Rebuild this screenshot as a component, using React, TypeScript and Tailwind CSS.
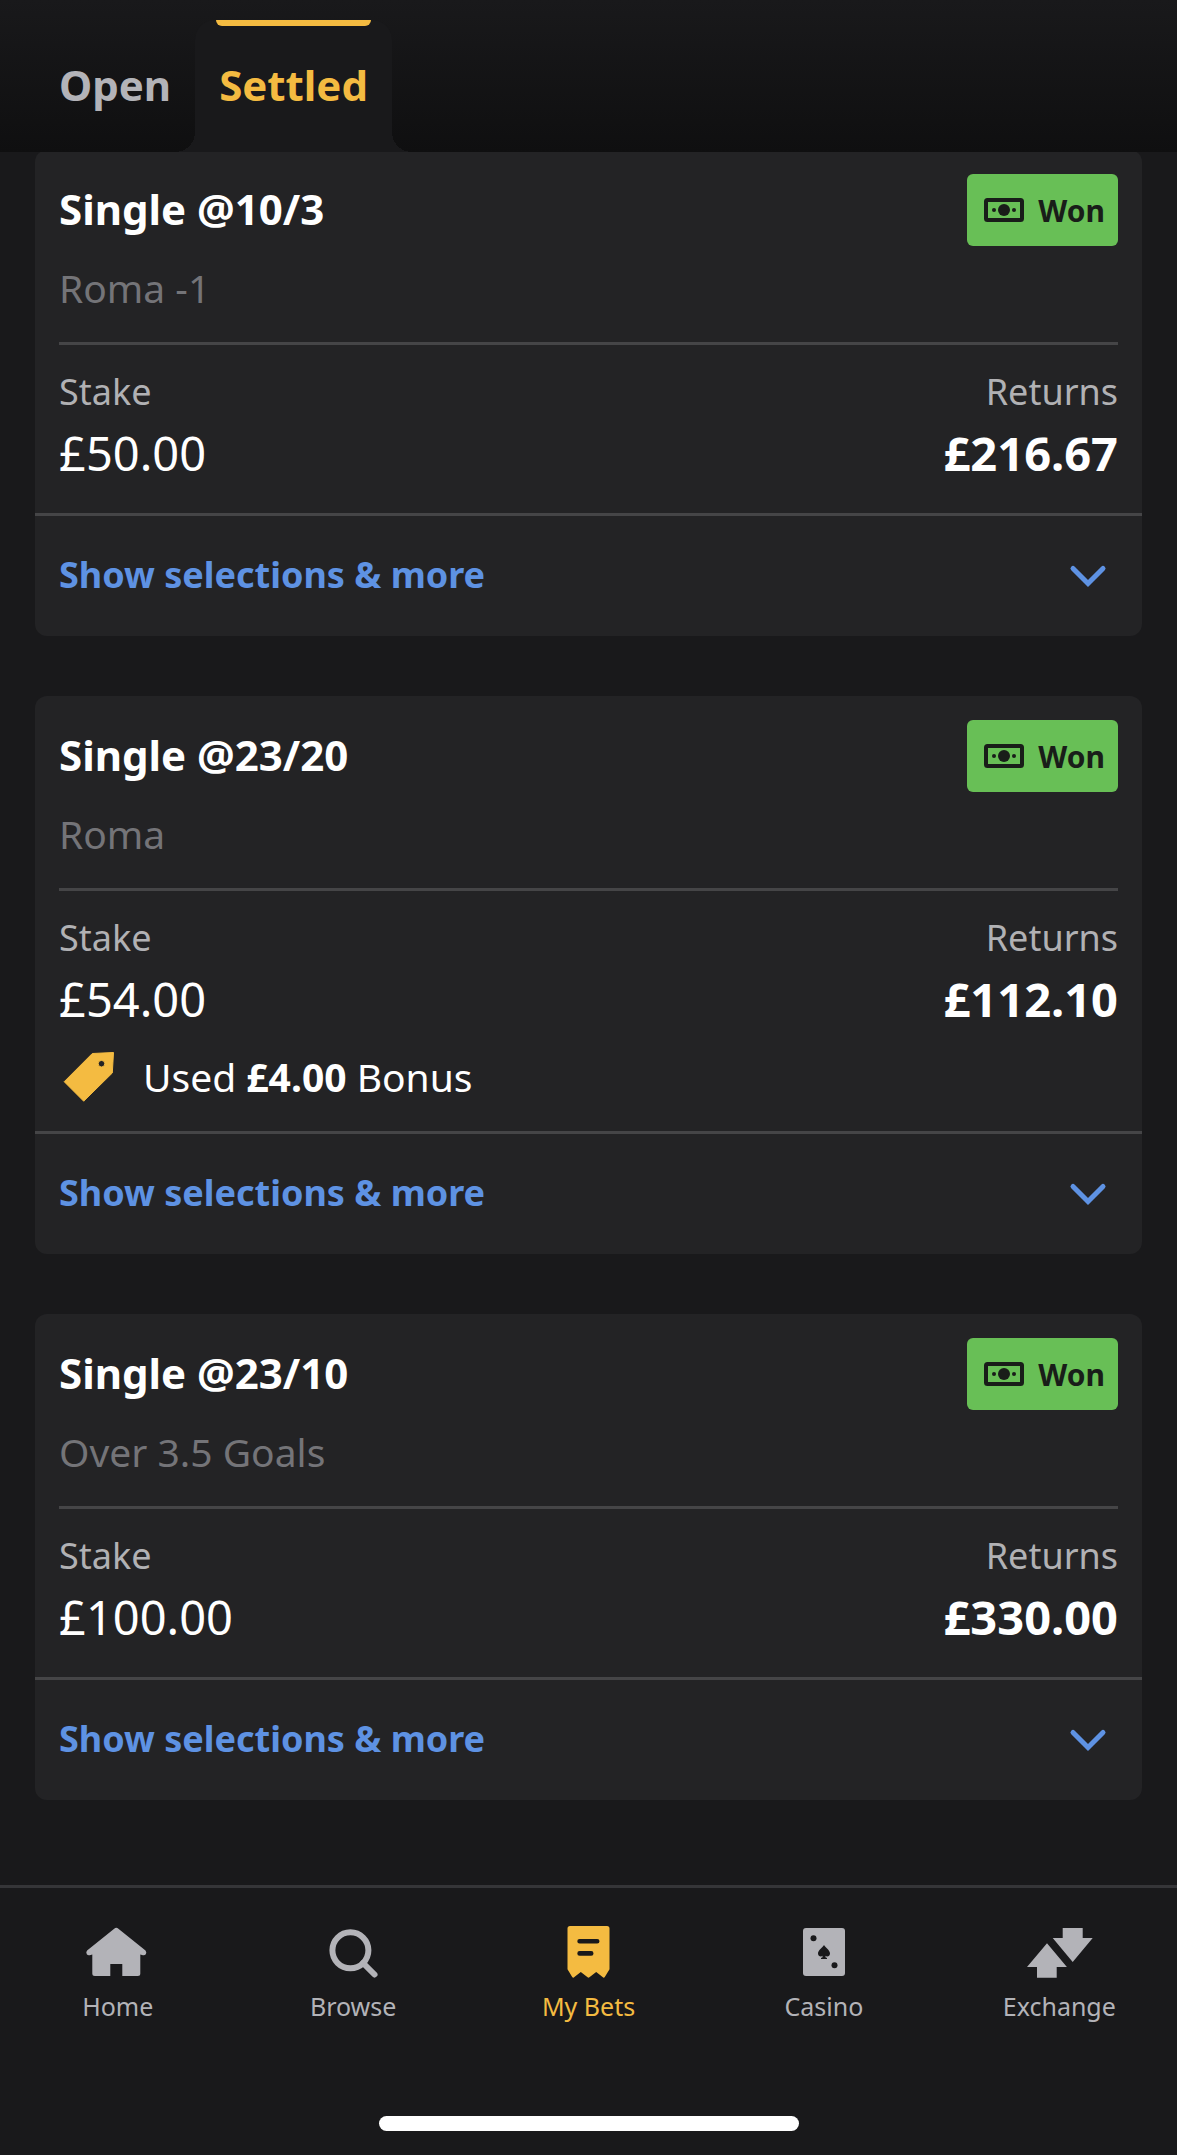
import { useState, type ReactNode } from "react";

type Bet = {
  odds: string;
  selection: string;
  stake: string;
  returns: string;
  bonus?: string;
};

const bets: Bet[] = [
  { odds: "10/3", selection: "Roma -1", stake: "£50.00", returns: "£216.67" },
  { odds: "23/20", selection: "Roma", stake: "£54.00", returns: "£112.10", bonus: "£4.00" },
  { odds: "23/10", selection: "Over 3.5 Goals", stake: "£100.00", returns: "£330.00" },
];

function BanknoteIcon() {
  return (
    <svg viewBox="0 0 40 24" className="h-6 w-10 shrink-0" aria-hidden="true">
      <rect x="2" y="2" width="36" height="20" rx="1.5" fill="none" stroke="currentColor" strokeWidth="4" />
      <circle cx="20" cy="12" r="6" fill="currentColor" />
      <circle cx="10" cy="12" r="2" fill="currentColor" />
      <circle cx="30" cy="12" r="2" fill="currentColor" />
    </svg>
  );
}

function ChevronIcon() {
  return (
    <svg viewBox="0 0 60 60" className="size-[60px] shrink-0" aria-hidden="true">
      <path d="M15 22.5 30 37.5 45 22.5" fill="none" stroke="currentColor" strokeWidth="5" strokeLinecap="round" />
    </svg>
  );
}

function TagIcon() {
  return (
    <svg viewBox="0 0 60 58" className="h-[58px] w-[60px] shrink-0 text-[#f4bb41]" aria-hidden="true">
      <path
        fillRule="evenodd"
        fill="currentColor"
        stroke="currentColor"
        strokeWidth="1"
        strokeLinejoin="round"
        d="M33.3 5.5 54.5 4.5 53.3 25 24.7 53.2 5.2 33.7ZM42.5 12.4a3.3 3.3 0 1 0 0 6.6 3.3 3.3 0 1 0 0-6.6Z"
      />
    </svg>
  );
}

function Tab({ label, active, onSelect }: { label: string; active: boolean; onSelect: () => void }) {
  return (
    <button
      type="button"
      role="tab"
      aria-selected={active}
      onClick={onSelect}
      className={
        active
          ? "relative h-[132px] rounded-t-[20px] bg-[#19191b] px-6 pb-0.5 text-[42px] leading-[60px] font-bold text-[#f4bb41]"
          : "relative h-[132px] px-6 pb-0.5 text-[42px] leading-[60px] font-bold text-[#b3b3b8]"
      }
    >
      {label}
      {active && (
        <>
          <span className="absolute inset-x-[21px] top-0 h-1.5 rounded-b-md bg-[#f4bb41]" />
          <span className="absolute bottom-0 -left-5 size-5 bg-[radial-gradient(circle_at_0_0,transparent_20px,#19191b_20px)]" />
          <span className="absolute -right-5 bottom-0 size-5 bg-[radial-gradient(circle_at_100%_0,transparent_20px,#19191b_20px)]" />
        </>
      )}
    </button>
  );
}

function BetCard({ bet }: { bet: Bet }) {
  const [open, setOpen] = useState(false);
  return (
    <article className="rounded-xl bg-[#232325]">
      <div className="px-6 pt-6">
        <div className="flex h-[72px] items-center justify-between">
          <h2 className="pb-0.5 text-[42px] leading-[60px] font-bold text-white">Single @{bet.odds}</h2>
          <span className="flex h-[72px] items-center gap-[14px] rounded-md bg-[#68bf56] pr-[13px] pl-[17px] text-[30px] font-bold text-[#191d19]">
            <BanknoteIcon />
            Won
          </span>
        </div>
        <p className="mt-3 text-[39px] leading-[60px] text-[#747478]">{bet.selection}</p>
        <dl className="mt-6 flex justify-between border-t-3 border-[#454547] pt-[25px]">
          <div>
            <dt className="text-[36px] leading-[44px] text-[#b1b1b4]">Stake</dt>
            <dd className="mt-[9px] text-[47px] leading-[60px] text-white">{bet.stake}</dd>
          </div>
          <div className="text-right">
            <dt className="text-[36px] leading-[44px] text-[#b1b1b4]">Returns</dt>
            <dd className="mt-[9px] text-[47px] leading-[60px] font-bold text-white">{bet.returns}</dd>
          </div>
        </dl>
        {bet.bonus ? (
          <p className="mt-[19px] flex items-center gap-6 pb-[25px] text-[39px] leading-[58px] text-white">
            <TagIcon />
            <span>
              Used <b>{bet.bonus}</b> Bonus
            </span>
          </p>
        ) : (
          <div className="h-[30px]" />
        )}
      </div>
      <button
        type="button"
        aria-expanded={open}
        onClick={() => setOpen(!open)}
        className="flex h-[123px] w-full items-center justify-between border-t-3 border-[#454547] px-6 text-[36px] font-bold text-[#5e92e3]"
      >
        <span className="pb-0.5">Show selections &amp; more</span>
        <ChevronIcon />
      </button>
    </article>
  );
}

function NavItem({ label, current, children }: { label: string; current?: boolean; children: ReactNode }) {
  return (
    <a
      href="#"
      aria-current={current ? "page" : undefined}
      className={
        current
          ? "flex flex-1 flex-col items-center gap-1 text-[25px] leading-[40px] text-[#f4bb41]"
          : "flex flex-1 flex-col items-center gap-1 text-[25px] leading-[40px] text-[#b3b3b8]"
      }
    >
      <svg viewBox="0 0 72 60" className="h-[60px] w-[72px]" fill="currentColor" aria-hidden="true">
        {children}
      </svg>
      {label}
    </a>
  );
}

export default function App() {
  const [tab, setTab] = useState("Settled");
  return (
    <div className="flex min-h-screen flex-col bg-[#19191b] font-['Noto_Sans',sans-serif]">
      <header className="relative z-10 bg-linear-to-b from-[#19191b] to-[#0f0f10] pt-5">
        <div role="tablist" aria-label="Bets" className="flex px-[35px]">
          {["Open", "Settled"].map((name) => (
            <Tab key={name} label={name} active={tab === name} onSelect={() => setTab(name)} />
          ))}
        </div>
      </header>

      <main className="-mt-0.5 flex flex-1 flex-col gap-[60px] px-[35px] pb-[60px]">
        {bets.map((bet) => (
          <BetCard key={bet.odds} bet={bet} />
        ))}
      </main>

      <footer className="border-t-3 border-[#353538] pt-[34px] pb-6">
        <nav className="flex" aria-label="Main">
          <NavItem label="Home">
            <path d="M32.2 6.7Q34.3 5 36.4 6.7L63.5 28.5Q65 30.5 63.8 32.2T60 33L58.3 32.4V51.5Q58.3 54 55.8 54H40.3V42H28.3V54H12.8Q10.3 54 10.3 51.5V32.4L8.6 33Q6 34 4.8 32.2T5.1 28.5Z" />
          </NavItem>
          <NavItem label="Browse">
            <circle cx="33.4" cy="28.3" r="18" fill="none" stroke="currentColor" strokeWidth="6" />
            <path d="M46 41 57.5 52.5" stroke="currentColor" strokeWidth="6" strokeLinecap="round" />
          </NavItem>
          <NavItem label="My Bets" current>
            <path d="M17 4H54Q56.5 4 56.5 6.5V47.3L51.8 55Q50.8 56.4 49.6 55L43.2 50 36.4 55.3Q35.5 56 34.6 55.3L27.8 50 21.4 55Q20.2 56.4 19.2 55L14.5 47.3V6.5Q14.5 4 17 4Z" />
            <path d="M26.6 19.3H44.2M26.6 31.4H38.2" stroke="#19191b" strokeWidth="4.6" strokeLinecap="round" />
          </NavItem>
          <NavItem label="Casino">
            <rect x="15" y="6" width="42" height="48" rx="3" />
            <g fill="#19191b">
              <circle cx="25.5" cy="16.3" r="3" />
              <circle cx="46.5" cy="43.3" r="3" />
              <path d="M36 23C37.5 26 42 28 42 31.6C42 34.6 38.8 35.4 37.3 33.8L37.8 35.8H39V37H33V35.8H34.2L34.7 33.8C33.2 35.4 30 34.6 30 31.6C30 28 34.5 26 36 23Z" />
            </g>
          </NavItem>
          <NavItem label="Exchange">
            <path d="M39.7 6h20v10h10l-20 24-20-24h10ZM24 21.3 43.9 45H33.7v10.7h-19.7V45H4Z" />
          </NavItem>
        </nav>
        <div className="mx-auto mt-[90px] h-[15px] w-[420px] rounded-full bg-white" />
      </footer>
    </div>
  );
}
